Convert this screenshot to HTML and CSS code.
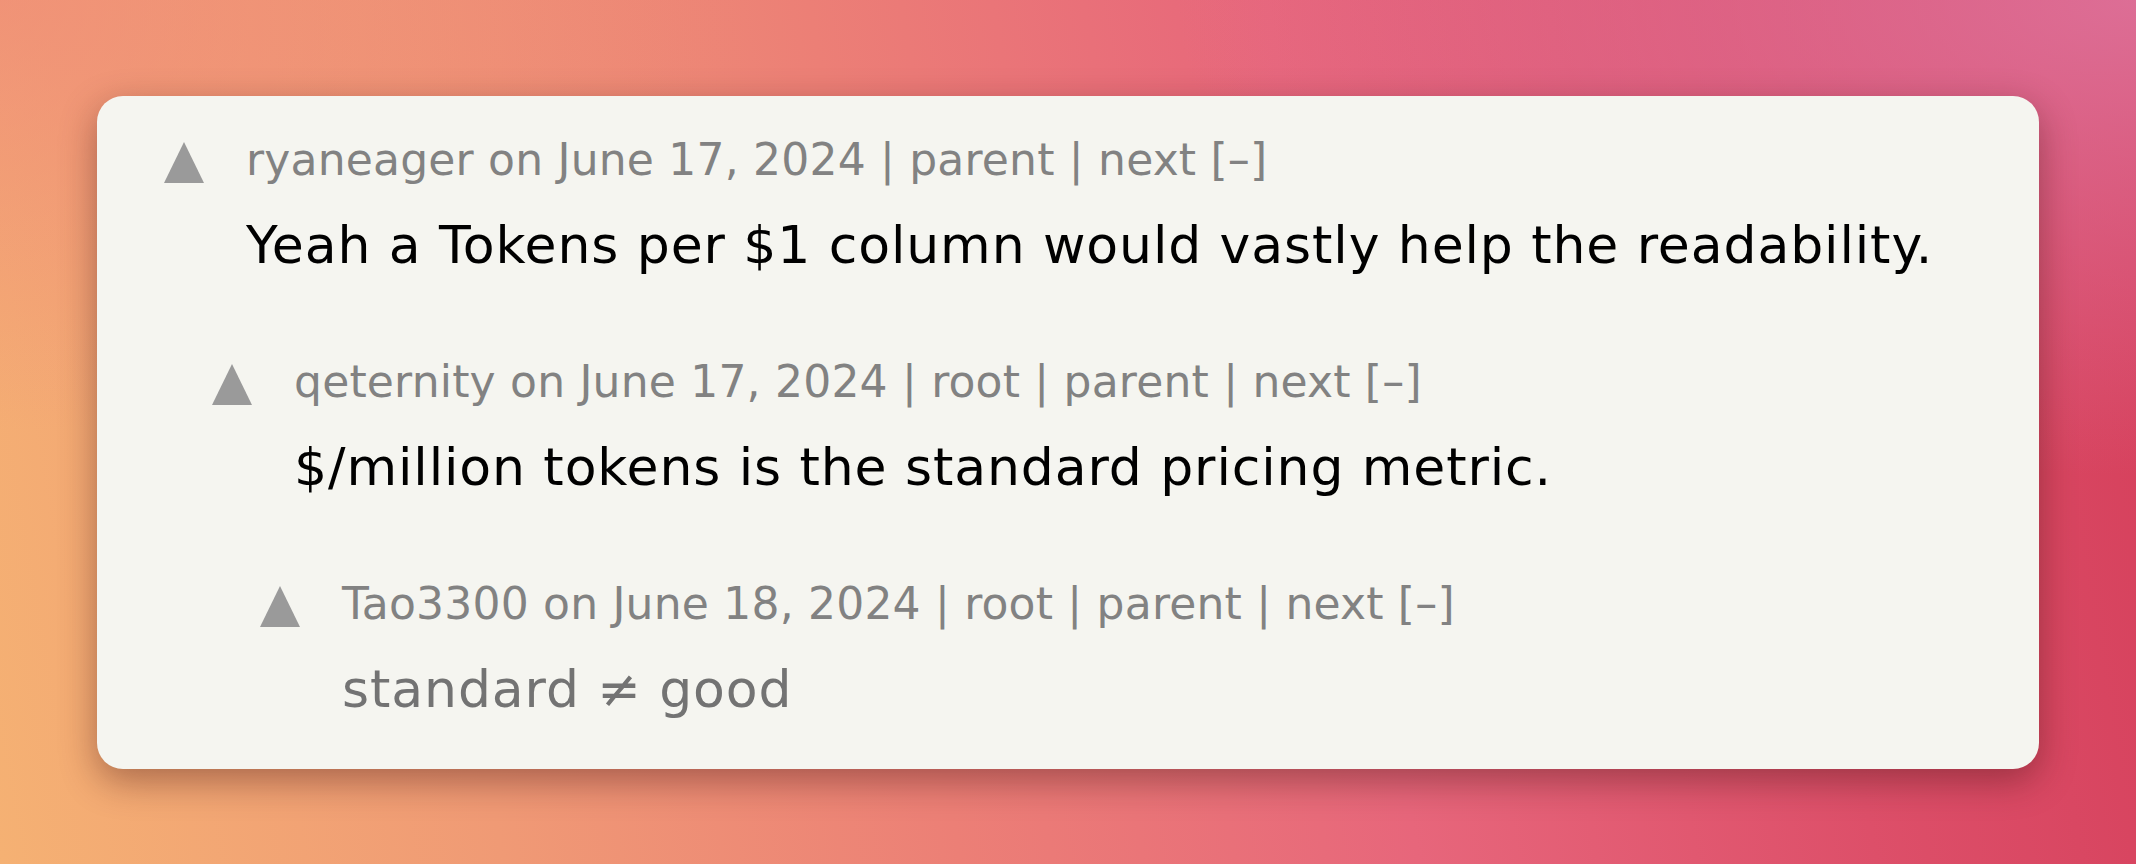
FILE: index.html
```html
<!DOCTYPE html>
<html lang="en">
<head>
<meta charset="utf-8">
<title>Comments</title>
<link rel="stylesheet" href="styles.css">
</head>
<body>
<main class="stage">
  <section class="card">
    <div class="comment level-0">
      <svg class="vote" viewBox="0 0 40 41" width="40" height="41"><polygon points="20,0 40,41 0,41" fill="#9a9a9a"/></svg>
      <div class="content">
        <div class="meta">ryaneager on June 17, 2024 | parent | next [–]</div>
        <div class="text">Yeah a Tokens per $1 column would vastly help the readability.</div>
      </div>
    </div>
    <div class="comment level-1">
      <svg class="vote" viewBox="0 0 40 41" width="40" height="41"><polygon points="20,0 40,41 0,41" fill="#9a9a9a"/></svg>
      <div class="content">
        <div class="meta">qeternity on June 17, 2024 | root | parent | next [–]</div>
        <div class="text">$/million tokens is the standard pricing metric.</div>
      </div>
    </div>
    <div class="comment level-2">
      <svg class="vote" viewBox="0 0 40 41" width="40" height="41"><polygon points="20,0 40,41 0,41" fill="#9a9a9a"/></svg>
      <div class="content">
        <div class="meta">Tao3300 on June 18, 2024 | root | parent | next [–]</div>
        <div class="text faded">standard ≠ good</div>
      </div>
    </div>
  </section>
</main>
</body>
</html>
```
FILE: styles.css
```css
html, body {
  margin: 0;
  padding: 0;
}
body {
  width: 2136px;
  height: 864px;
  overflow: hidden;
  font-family: "DejaVu Sans", sans-serif;
  background:
    radial-gradient(ellipse 45% 55% at 100% 0%, rgba(222, 118, 160, 0.85), rgba(222, 118, 160, 0) 100%),
    radial-gradient(ellipse 35% 50% at 0% 0%, rgba(238, 128, 122, 0.55), rgba(238, 128, 122, 0) 100%),
    linear-gradient(80deg, #f5b173 0%, #f09a75 22%, #ec7f76 42%, #e7667b 62%, #dd4f69 82%, #d53f5b 100%);
}
.stage {
  padding: 96px 97px;
}
.card {
  background: #f5f5f0;
  border-radius: 26px;
  box-shadow: 0 12px 36px rgba(70, 20, 20, 0.42);
  padding: 38px 60px 48px 67px;
  display: flex;
  flex-direction: column;
  gap: 79px;
}
.comment {
  display: flex;
  align-items: flex-start;
  gap: 42px;
}
.level-1 { padding-left: 48px; }
.level-2 { padding-left: 96px; }
.vote {
  flex: none;
  display: block;
  margin-top: 8px;
}
.content {
  display: flex;
  flex-direction: column;
  gap: 27px;
}
.meta {
  font-size: 44px;
  line-height: 52px;
  letter-spacing: 0.2px;
  color: #828282;
  white-space: nowrap;
}
.text {
  font-size: 52px;
  line-height: 64px;
  letter-spacing: 0.9px;
  color: #000;
  white-space: nowrap;
}
.text.faded {
  color: #737373;
}
```
